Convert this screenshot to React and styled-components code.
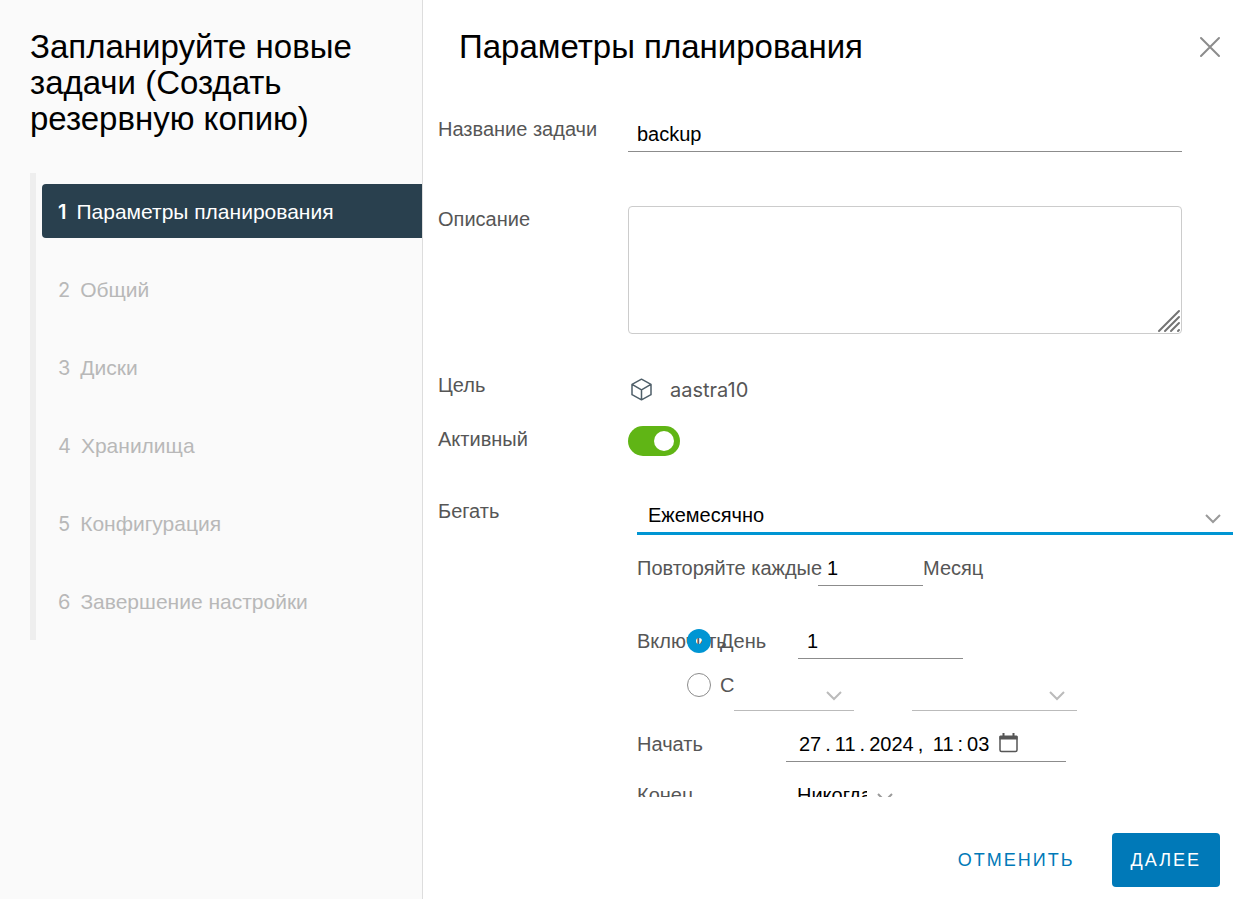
import React, { useState } from "react";
import styled, { createGlobalStyle, css } from "styled-components";

const sans = `"Liberation Sans", Arial, sans-serif`;
const latin = `Inter, "Liberation Sans", sans-serif`;

const GlobalStyle = createGlobalStyle`
  *, *::before, *::after { box-sizing: border-box; }
  body { margin: 0; background: #fff; font-family: ${sans}; color: #565656; }
  button, input, select, textarea { font-family: inherit; }
`;

const Wizard = styled.div`
  display: flex;
  height: 100vh;
  overflow: hidden;
`;

const Sidebar = styled.aside`
  flex: 0 0 423px;
  padding: 29px 0 0 30px;
  background: #fafafa;
  border-right: 1px solid #dddddd;
`;

const WizardTitle = styled.h1`
  margin: 0;
  padding-right: 60px;
  font-size: 33px;
  font-weight: 400;
  line-height: 36px;
  color: #000;
`;

const Steps = styled.ol`
  display: flex;
  flex-direction: column;
  gap: 24px;
  margin: 36px 0 0;
  padding: 11px 0 12px 6px;
  list-style: none;
  border-left: 6px solid #eeeeee;
`;

const Step = styled.button`
  display: flex;
  align-items: center;
  gap: 10px;
  width: 100%;
  height: 54px;
  padding: 1px 16px 0;
  border: 0;
  border-radius: 4px 0 0 4px;
  background: ${(p) => (p.$active ? "#29404e" : "transparent")};
  color: ${(p) => (p.$active ? "#fff" : "#b8b8b8")};
  font-size: 21px;
  line-height: 24px;
  text-align: left;
`;

const StepNumber = styled.span`
  font-family: ${latin};
  font-size: 20px;
  font-weight: ${(p) => (p.$active ? 600 : 400)};
`;

const Main = styled.main`
  flex: 1;
  min-width: 0;
  display: flex;
  flex-direction: column;
`;

const Header = styled.header`
  display: flex;
  justify-content: space-between;
  align-items: center;
  flex: none;
  height: 94px;
  padding: 0 24px 0 36px;
`;

const PageTitle = styled.h2`
  margin: 0;
  font-size: 33px;
  font-weight: 400;
  line-height: 36px;
  color: #000;
`;

const IconButton = styled.button`
  display: flex;
  padding: 0;
  border: 0;
  background: none;
  color: ${(p) => p.$color};
`;

const Body = styled.form`
  flex: 1;
  min-height: 0;
  overflow: hidden;
  padding: 22px 14px 0 15px;
`;

const Field = styled.div`
  display: grid;
  grid-template-columns: 190px 1fr;
  align-items: start;
  min-height: 36px;
  margin-bottom: ${(p) => p.$gap}px;
  padding-right: ${(p) => (p.$wide ? 0 : 51)}px;
`;

const labelText = css`
  font-size: 20px;
  line-height: 24px;
  white-space: nowrap;
`;

const Label = styled.label`
  ${labelText}
  padding-top: 1px;
`;

const FieldName = styled.span`
  ${labelText}
  padding-top: 1px;
`;

const TextInput = styled.input`
  width: ${(p) => p.$width || "100%"};
  height: 36px;
  padding: 1px 9px 0;
  border: 0;
  border-bottom: 1px solid #8c8c8c;
  border-radius: 0;
  outline: 0;
  background: transparent;
  color: #000;
  font-size: 20px;
`;

const TextAreaBox = styled.div`
  position: relative;
  display: flex;
`;

const TextArea = styled.textarea`
  width: 100%;
  height: 128px;
  padding: 9px;
  border: 1px solid #cccccc;
  border-radius: 4px;
  outline: 0;
  resize: none;
  font-size: 20px;
`;

const Grip = styled.svg`
  position: absolute;
  right: 1px;
  bottom: 1px;
  pointer-events: none;
`;

const Target = styled.div`
  display: flex;
  align-items: center;
  gap: 15px;
  height: 36px;
  padding-left: 1px;
  font-family: ${latin};
  font-size: 20px;
`;

const Switch = styled.input`
  appearance: none;
  display: flex;
  align-items: center;
  justify-content: flex-end;
  width: 52px;
  height: 30px;
  margin: 0;
  padding: 6px;
  border-radius: 15px;
  background: #60b515;

  &::before {
    content: "";
    width: 20px;
    height: 20px;
    border-radius: 50%;
    background: #fff;
  }
  &:not(:checked) {
    justify-content: flex-start;
    background: #8c8c8c;
  }
`;

const Schedule = styled.div`
  padding-left: 9px;
`;

const SelectBox = styled.div`
  position: relative;
  width: ${(p) => p.$width || "100%"};
`;

const Select = styled.select`
  appearance: none;
  display: block;
  width: 100%;
  height: ${(p) => (p.$active ? 37 : 36)}px;
  padding: 0 38px 0 11px;
  border: 0;
  border-bottom: ${(p) => (p.$active ? "3px solid #0095d3" : p.disabled ? "1px solid #bbbbbb" : "1px solid #8c8c8c")};
  border-radius: 0;
  outline: 0;
  background: transparent;
  color: #000;
  font-size: 20px;
  opacity: 1;
`;

const Chevron = styled.svg`
  position: absolute;
  right: 11px;
  bottom: ${(p) => (p.$active ? 10 : 9)}px;
  pointer-events: none;
`;

const Line = styled.div`
  display: flex;
  align-items: flex-start;
  margin-top: ${(p) => p.$gap}px;
`;

const LineLabel = styled.label`
  ${labelText}
  flex: 0 0 auto;
  width: ${(p) => p.$width || "auto"};
  padding-top: 6px;
`;

const LineText = styled.span`
  ${labelText}
  flex: 0 0 auto;
  width: ${(p) => p.$width || "auto"};
  padding-top: 6px;
`;

const Options = styled.div`
  display: flex;
  flex-direction: column;
  gap: 8px;
`;

const Option = styled.div`
  display: flex;
  align-items: flex-start;
`;

const Pickers = styled.div`
  display: flex;
  gap: 58px;
  padding-top: 8px;
`;

const Radio = styled.input`
  appearance: none;
  flex: none;
  width: 24px;
  height: 24px;
  margin: 6px 9px 0 0;
  border: 1px solid #8c8c8c;
  border-radius: 50%;

  &:checked {
    border: 0;
    box-shadow: inset 0 0 0 9px #0095d3;
  }
`;

const DateBox = styled.div`
  display: flex;
  align-items: center;
  width: 280px;
  border-bottom: 1px solid #8c8c8c;
`;

const DateInput = styled.input`
  width: 212px;
  height: 35px;
  padding: 1px 0 0 13px;
  border: 0;
  outline: 0;
  background: transparent;
  color: #000;
  font-size: 20px;
`;

const Footer = styled.footer`
  display: flex;
  justify-content: flex-end;
  flex: none;
  gap: 18px;
  padding: 36px 27px 12px;
`;

const Button = styled.button`
  height: 54px;
  padding: 0 19px;
  border: 0;
  border-radius: 4px;
  background: ${(p) => (p.$primary ? "#0079b8" : "transparent")};
  color: ${(p) => (p.$primary ? "#fff" : "#0079b8")};
  font-size: 18px;
  letter-spacing: 2px;
  text-transform: uppercase;
`;

function Dropdown({ id, label, value, width, disabled, active }) {
  return (
    <SelectBox $width={width}>
      <Select id={id} aria-label={label} defaultValue={value} disabled={disabled} $active={active}>
        <option value={value}>{value}</option>
      </Select>
      <Chevron $active={active} width="18" height="12" viewBox="0 0 18 12" fill="none" stroke={disabled ? "#bbbbbb" : "#9a9a9a"} strokeWidth="2">
        <path d="M2 2l7 7 7-7" />
      </Chevron>
    </SelectBox>
  );
}

const steps = ["Параметры планирования", "Общий", "Диски", "Хранилища", "Конфигурация", "Завершение настройки"];

const startDate = "27\u2009.\u200911\u2009.\u20092024\u2009,\u2009 11\u2009:\u200903";

export default function App() {
  const [mode, setMode] = useState("day");
  return (
    <Wizard>
      <GlobalStyle />
      <Sidebar>
        <WizardTitle>Запланируйте новые задачи (Создать резервную копию)</WizardTitle>
        <Steps>
          {steps.map((name, i) => (
            <li key={name}>
              <Step type="button" $active={i === 0}>
                <StepNumber $active={i === 0}>{i + 1}</StepNumber>
                <span>{name}</span>
              </Step>
            </li>
          ))}
        </Steps>
      </Sidebar>
      <Main>
        <Header>
          <PageTitle>Параметры планирования</PageTitle>
          <IconButton type="button" aria-label="Закрыть" $color="#8c8c8c">
            <svg width="26" height="26" viewBox="0 0 26 26" fill="none" stroke="currentColor" strokeWidth="2" strokeLinecap="round">
              <path d="M4 4l18 18M22 4L4 22" />
            </svg>
          </IconButton>
        </Header>
        <Body>
          <Field $gap={54}>
            <Label htmlFor="name">Название задачи</Label>
            <TextInput id="name" defaultValue="backup" />
          </Field>
          <Field $gap={38}>
            <Label htmlFor="description">Описание</Label>
            <TextAreaBox>
              <TextArea id="description" />
              <Grip width="24" height="24" viewBox="0 0 24 24" stroke="#747474" strokeWidth="2" strokeLinecap="round">
                <path d="M2 22L22 2M8 22L22 8M14 22l8-8M21 22l1-1" />
              </Grip>
            </TextAreaBox>
          </Field>
          <Field $gap={18}>
            <FieldName>Цель</FieldName>
            <Target>
              <svg width="26" height="26" viewBox="0 0 26 26" fill="none" stroke="#4f5f69" strokeWidth="1.5" strokeLinejoin="round" strokeLinecap="round">
                <path d="M12.500 2.200L22 7.300V17.700L12.500 22.800L3 17.700V7.300ZM3.500 7.600l9 5.200L21.500 7.600M12.500 12.800V22.500" />
              </svg>
              <span>aastra10</span>
            </Target>
          </Field>
          <Field $gap={36}>
            <Label htmlFor="active">Активный</Label>
            <Switch id="active" type="checkbox" role="switch" defaultChecked />
          </Field>
          <Field $gap={0} $wide>
            <Label htmlFor="run">Бегать</Label>
            <Schedule>
              <Dropdown id="run" value="Ежемесячно" active />
              <Line $gap={15}>
                <LineLabel htmlFor="every" $width="181px">Повторяйте каждые</LineLabel>
                <TextInput id="every" defaultValue="1" $width="105px" />
                <LineText>Месяц</LineText>
              </Line>
              <Line $gap={37}>
                <LineText $width="50px">Включить</LineText>
                <Options>
                  <Option>
                    <Radio id="day" type="radio" name="mode" checked={mode === "day"} onChange={() => setMode("day")} />
                    <LineLabel htmlFor="day" $width="78px">День</LineLabel>
                    <TextInput aria-label="День месяца" defaultValue="1" $width="165px" />
                  </Option>
                  <Option>
                    <Radio id="from" type="radio" name="mode" checked={mode === "from"} onChange={() => setMode("from")} />
                    <LineLabel htmlFor="from" $width="14px">С</LineLabel>
                    <Pickers>
                      <Dropdown label="Порядок" value="" width="120px" disabled />
                      <Dropdown label="День недели" value="" width="165px" disabled />
                    </Pickers>
                  </Option>
                </Options>
              </Line>
              <Line $gap={15}>
                <LineLabel htmlFor="start" $width="149px">Начать</LineLabel>
                <DateBox>
                  <DateInput id="start" defaultValue={startDate} />
                  <IconButton type="button" aria-label="Открыть календарь" $color="#565656">
                    <svg width="21" height="22" viewBox="0 0 21 22" fill="none" stroke="currentColor">
                      <path d="M2 4h17v13a1.500 1.500 0 0 1-1.500 1.500h-14a1.500 1.500 0 0 1-1.500-1.500z" strokeWidth="1.500" />
                      <path d="M2.500 2.500h16a1 1 0 0 1 1 1v3h-18v-3a1 1 0 0 1 1-1z" fill="currentColor" stroke="none" />
                      <path d="M5.500 0v3M15.500 0v3" strokeWidth="2" />
                    </svg>
                  </IconButton>
                </DateBox>
              </Line>
              <Line $gap={15}>
                <LineLabel htmlFor="end" $width="149px">Конец</LineLabel>
                <Dropdown id="end" value="Никогда" width="119px" />
              </Line>
            </Schedule>
          </Field>
        </Body>
        <Footer>
          <Button type="button">Отменить</Button>
          <Button type="button" $primary>Далее</Button>
        </Footer>
      </Main>
    </Wizard>
  );
}
